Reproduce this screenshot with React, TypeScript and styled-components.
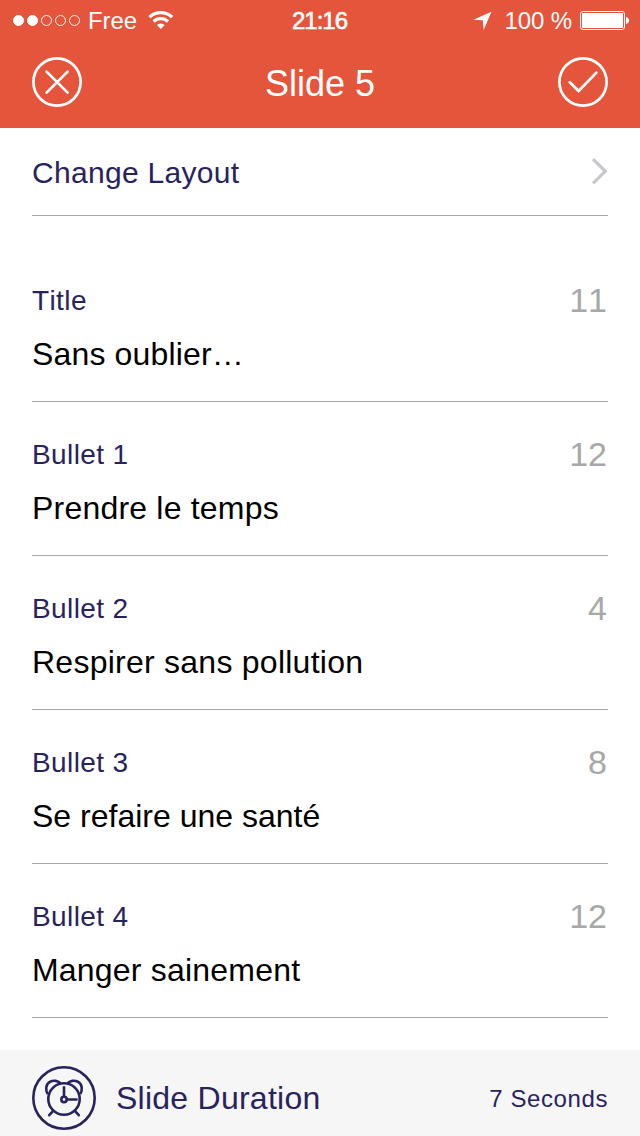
import React from "react";
import styled, { createGlobalStyle } from "styled-components";

const NAVY = "#28235f";
const ORANGE = "#e5553b";

const GlobalStyle = createGlobalStyle`
  * { box-sizing: border-box; }
  body {
    margin: 0;
    background: #fff;
    font-family: "Liberation Sans", Arial, sans-serif;
    font-kerning: none;
  }
  svg { display: block; flex: none; }
`;

const Screen = styled.div`
  width: 640px;
  height: 1136px;
  display: flex;
  flex-direction: column;
  background: #fff;
  overflow: hidden;
`;

const Header = styled.header`
  height: 128px;
  background: ${ORANGE};
  color: #fff;
`;

const StatusBar = styled.div`
  height: 42px;
  padding: 0 11px 0 13px;
  display: grid;
  grid-template-columns: 1fr auto 1fr;
  font-size: 24px;
  line-height: 42px;
`;

const StatusLeft = styled.div`
  display: flex;
  align-items: flex-start;
`;

const StatusRight = styled.div`
  display: flex;
  align-items: flex-start;
  justify-content: flex-end;
`;

const Carrier = styled.span`
  margin: 0 11px 0 7px;
  letter-spacing: -0.1px;
`;

const Clock = styled.span`
  padding-right: 3px;
  font-size: 24px;
  letter-spacing: -1px;
  -webkit-text-stroke: 0.6px #fff;
`;

const Percent = styled.span`
  margin: 0 8px 0 12px;
  letter-spacing: -0.1px;
`;

const NavBar = styled.nav`
  height: 86px;
  padding: 15px 32px 0;
  display: flex;
  justify-content: space-between;
`;

const NavTitle = styled.h1`
  margin: 0;
  font-size: 36px;
  font-weight: 400;
  line-height: 53px;
`;

const IconButton = styled.button`
  width: 50px;
  height: 50px;
  padding: 0;
  border: 0;
  background: none;
  color: inherit;
`;

const Content = styled.main`
  flex: 1;
  padding: 0 32px;
`;

const LayoutLink = styled.div`
  height: 88px;
  margin-bottom: 32px;
  border-bottom: 1px solid #a9a9ac;
  display: flex;
  justify-content: space-between;
  color: ${NAVY};
  font-size: 30px;
  line-height: 89px;
  letter-spacing: 0.3px;
`;

const Field = styled.section`
  height: 154px;
  padding-top: 34px;
  border-bottom: 1px solid #a9a9ac;
`;

const FieldHead = styled.div`
  height: 36px;
  display: flex;
  justify-content: space-between;
  line-height: 36px;
`;

const Label = styled.span`
  color: ${NAVY};
  font-size: 28px;
  line-height: 38px;
  letter-spacing: 0.4px;
`;

const Counter = styled.span`
  padding-right: 1px;
  color: #a7a7a9;
  font-size: 34px;
`;

const Value = styled.div<{ $tracking: number }>`
  padding-top: 16px;
  color: #000;
  font-size: 32px;
  line-height: 40px;
  letter-spacing: ${({ $tracking }) => $tracking}px;
`;

const Footer = styled.footer`
  height: 86px;
  padding: 16px 32px 0;
  display: flex;
  background: #f6f6f7;
  color: ${NAVY};
`;

const DurationLabel = styled.span`
  flex: 1;
  margin-left: 20px;
  font-size: 32px;
  line-height: 64px;
  letter-spacing: 0.25px;
`;

const Duration = styled.span`
  font-size: 24px;
  line-height: 66px;
  letter-spacing: 0.6px;
`;

const SignalDots = () => (
  <svg width="68" height="42" viewBox="0 0 68 42" fill="none" stroke="#fff">
    {[0, 1, 2, 3, 4].map((i) => (
      <circle key={i} cx={5.5 + i * 14} cy="20.5" r="5" fill={i < 2 ? "#fff" : "none"} />
    ))}
  </svg>
);

const Wifi = () => (
  <svg width="26" height="42" viewBox="0 0 26 42" fill="none" stroke="#fff" strokeWidth="3.2">
    <path d="M1.5 17.2A16.2 16.2 0 0 1 24.1 17.2" />
    <path d="M5.6 21.5A10.4 10.4 0 0 1 20 21.5" />
    <path d="M8.9 25A5.6 5.6 0 0 1 16.7 25L12.8 29Z" fill="#fff" stroke="none" />
  </svg>
);

const Location = () => (
  <svg width="19" height="42" viewBox="0 0 19 42" fill="#fff">
    <path d="M18.5 11.8L0.4 19.8L9.8 20.3L10.6 30Z" />
  </svg>
);

const Battery = () => (
  <svg width="49" height="42" viewBox="0 0 49 42" fill="#fff">
    <rect x="0.5" y="11.5" width="44" height="18" rx="2.5" fill="none" stroke="#fff" />
    <rect x="2" y="13" width="41" height="15" rx="1" />
    <path d="M46 17C50 17.4 50 23.6 46 24Z" />
  </svg>
);

const Close = () => (
  <svg width="50" height="50" viewBox="0 0 50 50" fill="none" stroke="currentColor" strokeWidth="2.7" strokeLinecap="round">
    <circle cx="25" cy="25" r="23.6" />
    <path d="M14.6 14.6L35.6 35.6M35.6 14.6L14.6 35.6" />
  </svg>
);

const Confirm = () => (
  <svg width="50" height="50" viewBox="0 0 50 50" fill="none" stroke="currentColor" strokeWidth="2.7" strokeLinecap="round">
    <circle cx="25" cy="25" r="23.6" />
    <path d="M11.8 25.2L20.6 34L38.4 15.6" />
  </svg>
);

const Chevron = () => (
  <svg width="18" height="88" viewBox="0 0 18 88" fill="none" stroke="#c7c7cc" strokeWidth="3.2">
    <path d="M3 31.2L15.3 43.3L3 55.4" />
  </svg>
);

const AlarmClock = () => (
  <svg width="64" height="64" viewBox="0 0 64 64" fill="none" stroke="currentColor" strokeWidth="2.6">
    <circle cx="32" cy="32" r="30.7" />
    <circle cx="32" cy="33" r="15.7" />
    <circle cx="32" cy="33.5" r="2.7" />
    <path d="M32 31V20.3M34.7 33.5H45.6" />
    <path
      d="M15.7 28.2C13.2 23.8 13.8 18.2 17.8 15.9C21.5 13.8 26.3 14.6 29 17.8M48.3 28.2C50.8 23.8 50.2 18.2 46.2 15.9C42.5 13.8 37.7 14.6 35 17.8"
    />
    <path d="M21.2 44.8L17.2 49.2M42.8 44.8L46.8 49.2" strokeLinecap="round" />
  </svg>
);

const fields = [
  { label: "Title", count: 11, value: "Sans oublier…", tracking: 0.15 },
  { label: "Bullet 1", count: 12, value: "Prendre le temps", tracking: 0.2 },
  { label: "Bullet 2", count: 4, value: "Respirer sans pollution", tracking: 0.25 },
  { label: "Bullet 3", count: 8, value: "Se refaire une santé", tracking: 0 },
  { label: "Bullet 4", count: 12, value: "Manger sainement", tracking: 0.2 },
];

export default function App() {
  return (
    <Screen>
      <GlobalStyle />
      <Header>
        <StatusBar>
          <StatusLeft>
            <SignalDots />
            <Carrier>Free</Carrier>
            <Wifi />
          </StatusLeft>
          <Clock>21:16</Clock>
          <StatusRight>
            <Location />
            <Percent>100 %</Percent>
            <Battery />
          </StatusRight>
        </StatusBar>
        <NavBar>
          <IconButton aria-label="Close"><Close /></IconButton>
          <NavTitle>Slide 5</NavTitle>
          <IconButton aria-label="Confirm"><Confirm /></IconButton>
        </NavBar>
      </Header>
      <Content>
        <LayoutLink>
          <span>Change Layout</span>
          <Chevron />
        </LayoutLink>
        {fields.map((field) => (
          <Field key={field.label}>
            <FieldHead>
              <Label>{field.label}</Label>
              <Counter>{field.count}</Counter>
            </FieldHead>
            <Value $tracking={field.tracking}>{field.value}</Value>
          </Field>
        ))}
      </Content>
      <Footer>
        <AlarmClock />
        <DurationLabel>Slide Duration</DurationLabel>
        <Duration>7 Seconds</Duration>
      </Footer>
    </Screen>
  );
}
